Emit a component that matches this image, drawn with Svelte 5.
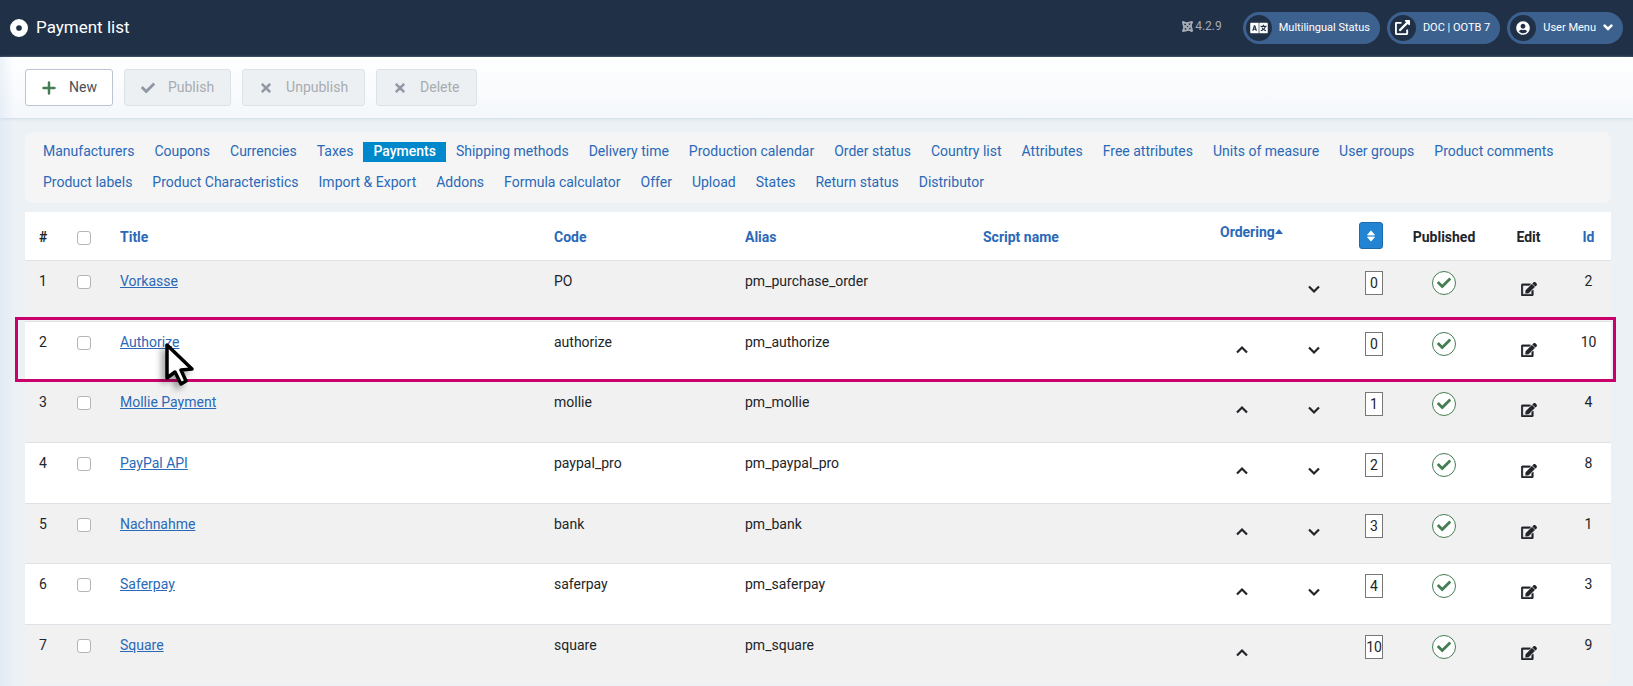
<script>
  const nav = [
    'Manufacturers', 'Coupons', 'Currencies', 'Taxes', 'Payments', 'Shipping methods', 'Delivery time',
    'Production calendar', 'Order status', 'Country list', 'Attributes', 'Free attributes',
    'Units of measure', 'User groups', 'Product comments', 'Product labels', 'Product Characteristics',
    'Import & Export', 'Addons', 'Formula calculator', 'Offer', 'Upload', 'States', 'Return status', 'Distributor'
  ];
  const rows = $state([
    { title: 'Vorkasse', code: 'PO', alias: 'pm_purchase_order', order: 0, id: 2, checked: false },
    { title: 'Authorize', code: 'authorize', alias: 'pm_authorize', order: 0, id: 10, checked: false, marked: true },
    { title: 'Mollie Payment', code: 'mollie', alias: 'pm_mollie', order: 1, id: 4, checked: false },
    { title: 'PayPal API', code: 'paypal_pro', alias: 'pm_paypal_pro', order: 2, id: 8, checked: false },
    { title: 'Nachnahme', code: 'bank', alias: 'pm_bank', order: 3, id: 1, checked: false },
    { title: 'Saferpay', code: 'saferpay', alias: 'pm_saferpay', order: 4, id: 3, checked: false },
    { title: 'Square', code: 'square', alias: 'pm_square', order: 10, id: 9, checked: false }
  ]);
  const check = 'M173.9 439.4l-166.4-166.4c-10-10-10-26.200 0-36.200l36.200-36.200c10-10 26.200-10 36.200 0L192 312.700 432.100 72.600c10-10 26.200-10 36.200 0l36.200 36.200c10 10 10 26.200 0 36.200l-294.400 294.400c-10 10-26.200 10-36.200 0z';
  const times = 'M242.700 256l100.100-100.100c12.300-12.300 12.300-32.200 0-44.500l-22.200-22.200c-12.300-12.300-32.200-12.300-44.500 0L176 189.300 75.900 89.200c-12.300-12.300-32.200-12.300-44.500 0L9.200 111.500c-12.300 12.300-12.300 32.200 0 44.500L109.300 256 9.200 356.100c-12.300 12.300-12.300 32.200 0 44.500l22.200 22.200c12.300 12.300 32.200 12.300 44.500 0L176 322.700l100.100 100.100c12.300 12.300 32.200 12.300 44.500 0l22.200-22.200c12.300-12.300 12.300-32.200 0-44.500L242.700 256z';
  const toggleAll = (e) => rows.forEach((r) => (r.checked = e.currentTarget.checked));
</script>

<header class="top">
  <div class="brand">
    <svg class="dot" viewBox="0 0 16 16" aria-hidden="true"><path fill-rule="evenodd" d="M8 0a8 8 0 1 0 0 16A8 8 0 0 0 8 0zm0 5.500a2.500 2.500 0 1 1 0 5 2.500 2.500 0 0 1 0-5z" /></svg>
    <h1>Payment list</h1>
  </div>
  <div class="status">
    <span class="version">
      <svg viewBox="0 0 20 20" aria-hidden="true">
        <g fill="none" stroke="currentColor" stroke-width="3.200" stroke-linecap="round">
          <path d="M3.500 11V8.500C1 6 3 3 5 3s3 1 4.500 2.500l5 5" />
          <path d="M9 3.500h2.500C14 1 17 3 17 5s-1 3-2.500 4.500l-5 5" />
          <path d="M16.500 9v2.500C19 14 17 17 15 17s-3-1-4.500-2.500l-5-5" />
          <path d="M11 16.500H8.500C6 19 3 17 3 15s1-3 2.500-4.500l5-5" />
        </g>
        <circle cx="2.500" cy="2.500" r="2.500" /><circle cx="17.500" cy="2.500" r="2.500" /><circle cx="2.500" cy="17.500" r="2.500" /><circle cx="17.500" cy="17.500" r="2.500" />
      </svg>
      4.2.9
    </span>
    <a class="pill" href="#status">
      <span class="disc">
        <svg width="18" height="14" viewBox="0 0 640 512" aria-hidden="true"><path fill-rule="evenodd" d="M24 64h284v384H24a24 24 0 0 1-24-24V88a24 24 0 0 1 24-24zM332 64h284a24 24 0 0 1 24 24v336a24 24 0 0 1-24 24H332zM134 152L70 360h48l12-40h56l12 40h48L182 152zm24 66l18 62h-36zM462 140v36h-86v40h146c-8 24-22 46-40 64-12-12-22-26-30-42h-42c8 26 22 48 40 68-20 14-42 24-68 32l16 36c32-10 60-24 84-42 24 18 52 32 84 42l16-36c-26-8-48-18-68-32 26-26 44-56 52-90h28v-40h-90v-36z" /></svg>
      </span>
      Multilingual Status
    </a>
    <a class="pill" href="#site">
      <span class="disc">
        <svg width="15" height="15" viewBox="0 0 512 512" aria-hidden="true"><path d="M432 320h-32a16 16 0 0 0-16 16v112H64V128h144a16 16 0 0 0 16-16V80a16 16 0 0 0-16-16H48a48 48 0 0 0-48 48v352a48 48 0 0 0 48 48h352a48 48 0 0 0 48-48V336a16 16 0 0 0-16-16zM488 0H360c-21 0-32 26-17 41l36 36L136 320a24 24 0 0 0 0 34l22 22a24 24 0 0 0 34 0l243-243 36 36c15 15 41 4 41-17V24a24 24 0 0 0-24-24z" /></svg>
      </span>
      DOC | OOTB 7
    </a>
    <button class="pill" type="button">
      <span class="disc">
        <svg width="14" height="14" viewBox="0 0 496 512" aria-hidden="true"><path d="M248 8C111 8 0 119 0 256s111 248 248 248 248-111 248-248S385 8 248 8zm0 96c48.600 0 88 39.400 88 88s-39.400 88-88 88-88-39.400-88-88 39.400-88 88-88zm0 344c-58.700 0-111.300-26.600-146.500-68.200 18.800-35.400 55.600-59.800 98.500-59.800 2.400 0 4.800.4 7.100 1.100 13 4.200 26.600 6.900 40.900 6.900s28-2.700 40.900-6.900c2.300-.7 4.700-1.100 7.100-1.100 42.900 0 79.700 24.400 98.500 59.800C359.300 421.400 306.700 448 248 448z" /></svg>
      </span>
      User Menu
      <svg class="caret" width="10" height="7" viewBox="0 0 10 7" aria-hidden="true"><path d="M1.600 1.600L5 5l3.400-3.400" fill="none" stroke="currentColor" stroke-width="2.600" stroke-linecap="round" /></svg>
    </button>
  </div>
</header>

<div class="toolbar">
  <button type="button" class="new">
    <svg width="16" height="14" viewBox="0 0 16 14" aria-hidden="true"><path d="M8 1.500v11M2.500 7h11" stroke="currentColor" stroke-width="2.500" stroke-linecap="round" /></svg>New
  </button>
  <button type="button" disabled><svg width="16" height="14" viewBox="0 0 512 512" aria-hidden="true"><path d={check} /></svg>Publish</button>
  <button type="button" disabled><svg width="16" height="14" viewBox="0 0 352 512" aria-hidden="true"><path d={times} /></svg>Unpublish</button>
  <button type="button" disabled><svg width="16" height="14" viewBox="0 0 352 512" aria-hidden="true"><path d={times} /></svg>Delete</button>
</div>

<main>
  <nav aria-label="Options">
    {#each nav as item}
      <a href="#{item}" class:active={item === 'Payments'}>{item}</a>
    {/each}
  </nav>

  <table>
    <colgroup>
      <col class="c-num" /><col class="c-check" /><col /><col class="c-code" /><col class="c-alias" /><col class="c-script" />
      <col class="c-move" /><col class="c-move" /><col class="c-order" /><col class="c-pub" /><col class="c-edit" /><col class="c-id" />
    </colgroup>
    <thead>
      <tr>
        <th>#</th>
        <th><input type="checkbox" aria-label="Check all items" onchange={toggleAll} /></th>
        <th><a href="#title">Title</a></th>
        <th><a href="#code">Code</a></th>
        <th><a href="#alias">Alias</a></th>
        <th><a href="#script">Script name</a></th>
        <th colspan="2" class="upper"><a href="#ordering">Ordering<svg class="sorted" width="8" height="5" viewBox="0 0 8 5" aria-hidden="true"><path d="M0 5l4-5 4 5z" /></svg></a></th>
        <th class="right">
          <button type="button" class="sort" aria-label="Save order"><svg width="8" height="12" viewBox="0 0 8 12" aria-hidden="true"><path d="M.5 5L4 .8 7.500 5zM.5 7L4 11.200 7.500 7z" stroke="currentColor" stroke-linejoin="round" stroke-width=".8" /></svg></button>
        </th>
        <th class="center">Published</th>
        <th class="center">Edit</th>
        <th class="center"><a href="#id">Id</a></th>
      </tr>
    </thead>
    <tbody>
      {#each rows as row, i}
        <tr>
          <td>{i + 1}{#if row.marked}<span class="marker"></span>{/if}</td>
          <td><input type="checkbox" aria-label="Select {row.title}" bind:checked={row.checked} /></td>
          <td class="title">
            <a href="#{row.title}">{row.title}</a>
            {#if row.marked}
              <svg class="cursor" width="40" height="56" viewBox="0 0 40 56" aria-hidden="true">
                <path d="M13 4v33l8-6 6 12 5-3-5-11 11-1z" fill="#fff" stroke="#000" stroke-width="3.500" stroke-linejoin="round" />
              </svg>
            {/if}
          </td>
          <td>{row.code}</td>
          <td>{row.alias}</td>
          <td></td>
          <td class="center low">
            {#if i > 0}<button type="button" class="icon" aria-label="Move up"><svg width="14" height="10" viewBox="0 0 14 10" aria-hidden="true"><path d="M2 7.500l5-5 5 5" fill="none" stroke="currentColor" stroke-width="2.200" /></svg></button>{/if}
          </td>
          <td class="center low">
            {#if i < rows.length - 1}<button type="button" class="icon" aria-label="Move down"><svg width="14" height="10" viewBox="0 0 14 10" aria-hidden="true"><path d="M2 2.500l5 5 5-5" fill="none" stroke="currentColor" stroke-width="2.200" /></svg></button>{/if}
          </td>
          <td class="right box"><input type="text" class="order" aria-label="Order of {row.title}" bind:value={row.order} /></td>
          <td class="center box"><button type="button" class="pub" aria-label="Published"><svg width="14" height="14" viewBox="0 0 512 512" aria-hidden="true"><path d={check} /></svg></button></td>
          <td class="center low">
            <a class="icon" href="#edit-{row.id}" aria-label="Edit {row.title}"><svg width="16" height="14" viewBox="0 0 576 512" aria-hidden="true"><path d="M402.600 83.200l90.200 90.200c3.800 3.800 3.800 10 0 13.800L274.400 405.600l-92.800 10.300c-12.400 1.400-22.900-9.100-21.500-21.500l10.300-92.800L388.800 83.200c3.800-3.800 10-3.800 13.800 0zm162-22.900l-48.800-48.800c-15.200-15.200-39.900-15.200-55.200 0l-35.400 35.400c-3.800 3.800-3.800 10 0 13.800l90.200 90.200c3.800 3.800 10 3.800 13.800 0l35.400-35.400c15.200-15.300 15.200-40 0-55.200zM384 346.200V448H64V128h229.800c3.200 0 6.200-1.300 8.500-3.500l40-40c7.600-7.600 2.200-20.500-8.500-20.500H48C21.500 64 0 85.500 0 112v352c0 26.500 21.500 48 48 48h352c26.500 0 48-21.500 48-48V306.200c0-10.700-12.900-16-20.500-8.500l-40 40c-2.200 2.300-3.500 5.300-3.500 8.500z" stroke="currentColor" stroke-width="14" /></svg></a>
          </td>
          <td class="center">{row.id}</td>
        </tr>
      {/each}
    </tbody>
  </table>
</main>

<style>
  :global(body) {
    background: linear-gradient(90deg, #e2eaf4 0, #ebf1f5 14px, #ebf1f5 100%);
    font-family: Roboto, sans-serif;
    font-size: 14px;
    line-height: 1.4;
    color: #212529;
  }
  button, input { font: inherit; }
  a { color: #2a69b8; }
  svg { fill: currentColor; display: block; }

  .top {
    display: flex;
    align-items: center;
    justify-content: space-between;
    height: 57px;
    box-sizing: border-box;
    padding: 0 10px 1px;
    background: #1f3047;
    color: #fff;
  }
  .brand { display: flex; align-items: center; gap: 8px; }
  .dot { width: 18px; height: 18px; }
  h1 { margin: 0; font-size: 17px; font-weight: 400; }
  .status { display: flex; align-items: center; gap: 7px; font-size: 12px; }
  .version { display: flex; align-items: center; gap: 2px; margin-right: 14px; padding-bottom: 3px; color: #a5acb5; }
  .version svg { width: 11px; height: 11px; }
  .pill {
    display: flex;
    align-items: center;
    gap: 7px;
    height: 32px;
    box-sizing: border-box;
    padding: 0 10px 1px 3px;
    border: 0;
    border-radius: 16px;
    background: #3d618f;
    color: #fff;
    font-size: 11px;
    line-height: 1.4;
    text-decoration: none;
  }
  .disc {
    display: grid;
    place-items: center;
    width: 26px;
    height: 26px;
    border-radius: 50%;
    background: #1f3047;
  }

  .toolbar {
    display: flex;
    gap: 11px;
    padding: 12px 25px;
    background:
      linear-gradient(90deg, rgb(210 224 240 / 40%), transparent 14px),
      linear-gradient(#fff, #f4f7fb);
    box-shadow: 0 1px 3px #cfdbe8;
  }
  .toolbar button {
    display: flex;
    align-items: center;
    gap: 12px;
    height: 37px;
    box-sizing: border-box;
    padding: 0 16px 0 15px;
    border: 1px solid #dde2e7;
    border-radius: 3px;
    background: #edf0f2;
    color: #a7acb1;
  }
  .toolbar svg { color: #8f98a4; }
  .toolbar .new { padding: 0 15px; background: #fff; border-color: #bac4d3; color: #495057; }
  .toolbar .new svg { color: #457d54; }

  main { padding: 14px 22px 1px 25px; }
  nav {
    display: flex;
    flex-wrap: wrap;
    gap: 11px 0;
    margin-bottom: 9px;
    padding: 10px 8px 11px;
    border-radius: 8px;
    background: #f5f5f5;
  }
  nav a { padding: 0 10px; text-decoration: none; }
  nav .active { background: #08c; color: #fff; font-weight: 500; }

  table {
    width: 100%;
    table-layout: fixed;
    border-collapse: separate;
    border-spacing: 0;
    background: #fff;
  }
  .c-num { width: 38px; }
  .c-check { width: 43px; }
  .c-code { width: 191px; }
  .c-alias { width: 238px; }
  .c-script { width: 237px; }
  .c-move { width: 72px; }
  .c-order { width: 47px; }
  .c-pub { width: 94px; }
  .c-edit { width: 75px; }
  .c-id { width: 45px; }
  th, td {
    padding: 11px 14px 29px;
    border-bottom: 1px solid #dee2e6;
    text-align: left;
    vertical-align: top;
  }
  th { padding: 12px 14px 9px; font-weight: 700; vertical-align: middle; white-space: nowrap; }
  th a { text-decoration: none; }
  th.upper { padding-top: 11px; vertical-align: top; }
  th.right, td.right { padding-left: 0; text-align: right; }
  th.right { padding-top: 10px; padding-bottom: 9px; vertical-align: top; }
  th.center, td.center { padding-left: 0; padding-right: 0; text-align: center; }
  thead tr { height: 49px; }
  tbody tr { position: relative; }
  tbody tr:nth-child(odd) { background: #f1f1f1; }
  tbody tr:last-child td { border-bottom-color: transparent; }
  td.low { padding-top: 21px; padding-bottom: 0; }
  td.box { padding-top: 10px; padding-bottom: 0; }

  input[type='checkbox'] {
    appearance: none;
    display: block;
    width: 14px;
    height: 14px;
    margin: 3px 0 0;
    border: 1px solid #b5b5b5;
    border-radius: 3px;
    background: #fff;
  }
  th input[type='checkbox'] { margin: 0; }
  input[type='checkbox']:checked { background: #2a69b8; }
  .sorted { display: inline-block; vertical-align: 3px; }
  .sort {
    display: inline-grid;
    place-items: center;
    width: 24px;
    height: 27px;
    padding: 0;
    border: 1px solid #1c6bab;
    border-radius: 3px;
    background: #2384d3;
    color: #fff;
    vertical-align: top;
  }
  .icon {
    display: inline-grid;
    place-items: center;
    height: 14px;
    padding: 0;
    border: 0;
    background: none;
    color: #212529;
    vertical-align: top;
  }
  .order {
    width: 18px;
    height: 24px;
    box-sizing: border-box;
    padding: 0;
    border: 1px solid #767676;
    background: #fff;
    color: #212529;
    text-align: center;
    vertical-align: top;
  }
  .pub {
    display: inline-grid;
    place-items: center;
    width: 24px;
    height: 24px;
    padding: 0;
    border: 1px solid #457d54;
    border-radius: 50%;
    background: #fff;
    color: #457d54;
    vertical-align: top;
  }
  .title { position: relative; }
  .marker {
    position: absolute;
    z-index: 1;
    inset: -5px -5px 0 -10px;
    border: 3px solid #c9006b;
    pointer-events: none;
  }
  .cursor {
    position: absolute;
    left: 48px;
    top: 19px;
    z-index: 2;
    filter: drop-shadow(-4px 4px 3px rgb(0 0 0 / 35%));
    pointer-events: none;
  }
</style>
